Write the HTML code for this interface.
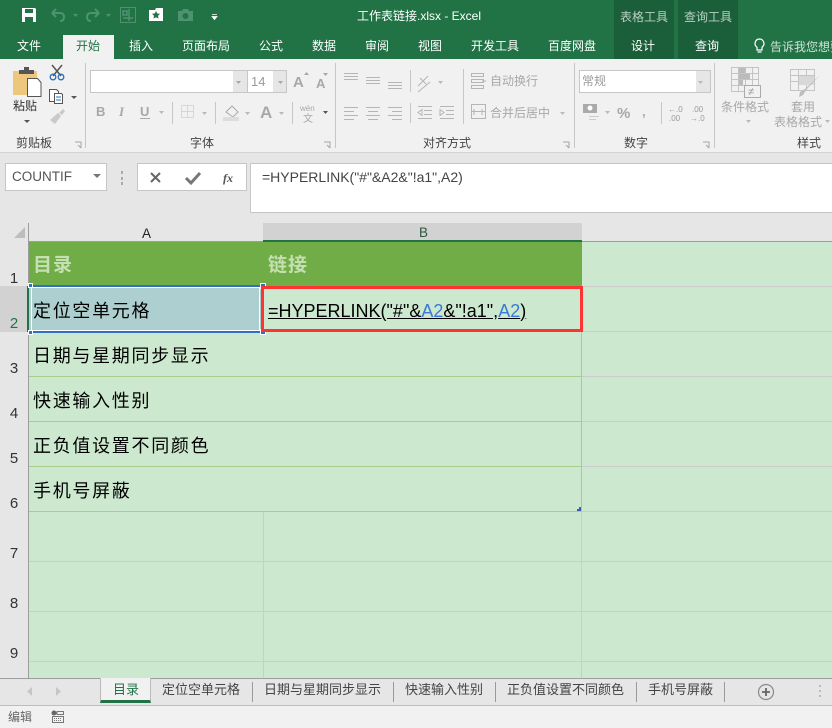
<!DOCTYPE html>
<html><head><meta charset="utf-8"><style>
*{margin:0;padding:0;box-sizing:border-box}
html,body{width:832px;height:728px;overflow:hidden;background:#f1f1f1}
body{position:relative;font-family:"Liberation Sans","Noto Sans CJK SC",sans-serif}
.a,.t{position:absolute}
.t{white-space:nowrap;line-height:1}
.r{font-size:12px;color:#444}
.g{font-size:12px;color:#a8a8a8}
.w{font-size:12px;color:#fff}
.c{font-size:18px;color:#000;letter-spacing:1.7px;left:33px}
.n{font-size:15px;color:#333;left:8px;width:12px;text-align:center}
.s{font-size:13px;color:#444;top:683px}
.l{position:absolute;background:#ccc}
.h{position:absolute;background:#a9cd8b}
.sep{position:absolute;width:1px;background:#c6c6c6}
.tab{position:absolute;width:1px;top:682px;height:20px;background:#9a9a9a}
svg{position:absolute;overflow:visible}
</style></head><body>
<div class="a" style="left:0;top:0;width:832px;height:59px;background:#217346"></div>
<div class="a" style="left:614px;top:0;width:60px;height:59px;background:#1b5e3a"></div>
<div class="a" style="left:678px;top:0;width:60px;height:59px;background:#1b5e3a"></div>
<div class="a" style="left:63px;top:35px;width:51px;height:24px;background:#f1f1f1"></div>
<svg style="left:0;top:0" width="340" height="34">
<path d="M22 8h13l1 1v13H22z" fill="#fff"/><path d="M25 9h8v4h-8zM25 17h8v5h-8z" fill="#217346"/>
<path d="M52 13l4-4M52 13l4 4M52 13h8q4 0 4 4t-4 4" stroke="#4e9270" stroke-width="2" fill="none"/>
<path d="M73 14h5l-2.500 3z" fill="#4e9270"/>
<path d="M99 13l-4-4M99 13l-4 4M99 13h-8q-4 0-4 4t4 4" stroke="#4e9270" stroke-width="2" fill="none"/>
<path d="M106 14h5l-2.500 3z" fill="#4e9270"/>
<rect x="120.500" y="7.500" width="15" height="15" fill="none" stroke="#4e9270"/><path d="M123 11h4v4h-4zM129 9v12M123 18h10" stroke="#4e9270" fill="none" stroke-width="1.500"/>
<path d="M149 10h6l1-2h7v13h-14z" fill="#fff"/><path d="M156 11l1.200 2.500 2.800.3-2 2 .5 2.800-2.500-1.300-2.500 1.300.5-2.800-2-2 2.800-.3z" fill="#217346"/>
<path d="M178 11h4l1-2h5l1 2h4v10h-15z" fill="#4e9270"/><circle cx="185.500" cy="16" r="3" fill="#217346"/>
<path d="M212 14.500h5M212 16.500h5l-2.500 3z" stroke="#fff" fill="#fff" stroke-width=".8"/>
</svg>
<span class="t w" style="left:357px;top:10px;font-size:12px">工作表链接.xlsx - Excel</span>
<span class="t" style="left:620px;top:11px;font-size:12px;color:#b9d0c2">表格工具</span>
<span class="t" style="left:684px;top:11px;font-size:12px;color:#b9d0c2">查询工具</span>
<span class="t w" style="left:17px;top:40px">文件</span>
<span class="t" style="left:76px;top:40px;font-size:12px;color:#217346">开始</span>
<span class="t w" style="left:129px;top:40px">插入</span>
<span class="t w" style="left:182px;top:40px">页面布局</span>
<span class="t w" style="left:259px;top:40px">公式</span>
<span class="t w" style="left:312px;top:40px">数据</span>
<span class="t w" style="left:365px;top:40px">审阅</span>
<span class="t w" style="left:418px;top:40px">视图</span>
<span class="t w" style="left:471px;top:40px">开发工具</span>
<span class="t w" style="left:548px;top:40px">百度网盘</span>
<span class="t w" style="left:631px;top:40px">设计</span>
<span class="t w" style="left:695px;top:40px">查询</span>
<span class="t" style="left:770px;top:41px;font-size:12px;color:#cfe0d6">告诉我您想要</span>
<svg style="left:752px;top:38px" width="16" height="18"><path d="M7.500 1a4.500 4.500 0 0 0-2.500 8.200V12h5V9.200A4.500 4.500 0 0 0 7.500 1zM5.500 14h4" fill="none" stroke="#fff" stroke-width="1.200"/></svg>

<div class="a" style="left:0;top:152px;width:832px;height:1px;background:#d4d4d4"></div>
<div class="a" style="left:0;top:153px;width:832px;height:70px;background:#e6e6e6"></div>
<div class="sep" style="left:85px;top:63px;height:85px"></div>
<div class="sep" style="left:335px;top:63px;height:85px"></div>
<div class="sep" style="left:574px;top:63px;height:85px"></div>
<div class="sep" style="left:714px;top:63px;height:85px"></div>
<div class="sep" style="left:463px;top:69px;height:55px"></div>
<div class="sep" style="left:410px;top:70px;height:22px"></div>
<div class="sep" style="left:410px;top:103px;height:20px"></div>

<svg style="left:0;top:60px" width="84" height="90">
<path d="M13 11h24v24H13z" fill="#eec77f"/>
<path d="M19 10h15v4H19z" fill="#555"/><path d="M24 7h5v3h-5z" fill="#555"/>
<path d="M27.500 18.500h10l3.500 4v14H27.500z" fill="#fff" stroke="#555"/>
<path d="M52 5l9 11M62 5l-9 11" stroke="#555" stroke-width="1.500"/><circle cx="53" cy="17" r="2.800" fill="none" stroke="#2a6fb5" stroke-width="1.300"/><circle cx="61" cy="17" r="2.800" fill="none" stroke="#2a6fb5" stroke-width="1.300"/>
<path d="M49.500 29.500h7l2 2v10h-9z" fill="#fff" stroke="#555"/><path d="M54.500 33.500h7l1 1v9h-8z" fill="#fff" stroke="#555"/><path d="M56 37h5M56 40h5" stroke="#2a6fb5"/>
<path d="M71 36h6l-3 3z" fill="#555"/>
<path d="M50 60l8-7 3 3-6 8zM59 53l4-4 2 2-3 4z" fill="#c9c9c9"/>
<path d="M24 60h6l-3 3z" fill="#555"/>
</svg>
<span class="t" style="left:13px;top:100px;font-size:12px;color:#333">粘贴</span>
<span class="t r" style="left:16px;top:137px">剪贴板</span>
<span class="t r" style="left:190px;top:137px">字体</span>
<span class="t r" style="left:423px;top:137px">对齐方式</span>
<span class="t r" style="left:624px;top:137px">数字</span>
<span class="t r" style="left:797px;top:137px">样式</span>
<svg style="left:0;top:140px" width="600" height="10"><path d="M75 2h6v6M78 5l3 3M324 2h6v6M327 5l3 3M563 2h6v6M566 5l3 3M703 2h6v6M706 5l3 3" fill="none" stroke="#a5a5a5"/></svg>

<div class="a" style="left:90px;top:70px;width:197px;height:23px;background:#fff;border:1px solid #c6c6c6"></div>
<div class="a" style="left:233px;top:71px;width:14px;height:21px;background:#e6e6e6"></div>
<div class="a" style="left:247px;top:70px;width:1px;height:23px;background:#c6c6c6"></div>
<div class="a" style="left:273px;top:71px;width:13px;height:21px;background:#e6e6e6"></div>
<span class="t" style="left:251px;top:75px;font-size:13px;color:#9a9a9a">14</span>
<svg style="left:85px;top:62px" width="250" height="68">
<path d="M151 19h5l-2.500 3zM193 19h5l-2.500 3z" fill="#a8a8a8"/>
<text x="208" y="25" font-size="15" font-family="Liberation Sans" fill="#a8a8a8" font-weight="bold">A</text><path d="M219 13h5l-2.500-3z" fill="#a8a8a8"/>
<text x="231" y="26" font-size="13" font-family="Liberation Sans" fill="#a8a8a8" font-weight="bold">A</text><path d="M238 11h5l-2.500 3z" fill="#a8a8a8"/>
<text x="11" y="54" font-size="13" font-family="Liberation Sans" fill="#a8a8a8" font-weight="bold">B</text>
<text x="34" y="54" font-size="13" font-family="Liberation Serif" fill="#a8a8a8" font-style="italic" font-weight="bold">I</text>
<text x="55" y="54" font-size="13" font-family="Liberation Sans" fill="#a8a8a8" font-weight="bold">U</text><path d="M55 56.500h10" stroke="#a8a8a8"/>
<path d="M74 49h5l-2.500 3zM117 50h5l-2.500 3zM160 50h5l-2.500 3zM194 50h5l-2.500 3z" fill="#b9b9b9"/>
<path d="M96.500 43.500h12v12h-12zM96.500 49.500h12M102.500 43.500v12" fill="none" stroke="#c9b9c9" stroke-dasharray="1 1"/>
<path d="M87.500 40v22M130.500 40v22M207.500 40v22" stroke="#c6c6c6"/>
<path d="M141 50l6-6 6 6-5 5z" fill="none" stroke="#aaa"/><path d="M138 55h16v4h-16z" fill="#ddd"/>
<text x="175" y="56" font-size="17" font-family="Liberation Sans" fill="#a8a8a8" font-weight="bold">A</text>
<text x="215" y="49" font-size="8" font-family="Liberation Sans" fill="#a8a8a8">wén</text>
<text x="218" y="60" font-size="10" font-family="Noto Sans CJK SC" fill="#a8a8a8">文</text>
<path d="M238 49h5l-2.500 3z" fill="#555"/>
</svg>

<svg style="left:340px;top:68px" width="130" height="60" stroke="#b5b5b5" fill="none">
<path d="M4 5.500h14M4 8.500h14M4 11.500h14M26 9.500h14M26 12.500h14M26 15.500h14M48 14.500h14M48 17.500h14M48 20.500h14"/>
<path d="M4 39.500h14M4 43.500h10M4 47.500h14M4 51.500h10M26 39.500h14M28 43.500h10M26 47.500h14M28 51.500h10M48 39.500h14M52 43.500h10M48 47.500h14M52 51.500h10"/>
<path d="M78 18l10-10M80 10l6 6M78 24l12-10"/>
<path d="M98 13h5l-2.500 3z" fill="#b9b9b9" stroke="none"/>
<path d="M78 38.500h14M84 42.500h8M84 46.500h8M78 50.500h14M100 38.500h14M106 42.500h8M106 46.500h8M100 50.500h14M78 44.500l4-3v6zM104 44.500l-4-3v6z"/>
</svg>
<svg style="left:470px;top:72px" width="100" height="50" stroke="#b5b5b5" fill="none">
<path d="M1.500 1.500h12v3h-12zM1.500 7.500h12v3h-12zM1.500 13.500h12v3h-12zM16 9h-4"/>
<path d="M1.500 32.500h14v14h-14zM1.500 39.500h14M4 37v6M12 37v6"/>
<path d="M90 40h5l-2.500 3z" fill="#b9b9b9" stroke="none"/>
</svg>
<span class="t g" style="left:490px;top:75px">自动换行</span>
<span class="t g" style="left:490px;top:107px">合并后居中</span>

<div class="a" style="left:579px;top:70px;width:132px;height:23px;background:#fff;border:1px solid #c6c6c6"></div>
<div class="a" style="left:696px;top:71px;width:14px;height:21px;background:#e6e6e6"></div>
<span class="t" style="left:582px;top:75px;font-size:12px;color:#9a9a9a">常规</span>
<svg style="left:580px;top:62px" width="135" height="70">
<path d="M118 19h5l-2.500 3z" fill="#b9b9b9"/>
<path d="M3 42h14v9H3z" fill="#aaa"/><circle cx="10" cy="46" r="2.500" fill="#fff"/><path d="M9 54.500h10M9 57.500h7" stroke="#ccc"/>
<path d="M25 49h5l-2.500 3z" fill="#b9b9b9"/>
<text x="37" y="56" font-size="15" font-family="Liberation Sans" fill="#a8a8a8" font-weight="bold">%</text>
<text x="62" y="54" font-size="13" font-family="Liberation Sans" fill="#a8a8a8" font-weight="bold">,</text>
<path d="M81.500 40v22" stroke="#c6c6c6"/>
<text x="88" y="50" font-size="8" font-family="Liberation Sans" fill="#9a9a9a">←.0</text><text x="89" y="59" font-size="8" font-family="Liberation Sans" fill="#9a9a9a">.00</text>
<text x="112" y="50" font-size="8" font-family="Liberation Sans" fill="#9a9a9a">.00</text><text x="110" y="59" font-size="8" font-family="Liberation Sans" fill="#9a9a9a">→.0</text>
</svg>
<svg style="left:730px;top:66px" width="102" height="60" fill="none" stroke="#c4c4c4">
<path d="M1.500 1.500h27v24h-27zM1.500 7.500h27M1.500 13.500h27M1.500 19.500h27M8.500 1.500v24M15.500 1.500v24M22.500 1.500v24"/>
<path d="M9 2h6v5h-6zM9 8h11v5H9zM9 14h4v5H9z" fill="#bbb" stroke="none"/>
<path d="M14.500 19.500h16v12h-16z" fill="#f1f1f1" stroke="#aaa"/><text x="18" y="29" font-size="11" font-family="Liberation Sans" fill="#999" stroke="none">≠</text>
<path d="M60.500 3.500h24v21h-24zM60.500 9.500h24M60.500 15.500h24M68.500 3.500v21M76.500 3.500v21"/>
<path d="M69 10h15v9H69z" fill="#d8d8d8" stroke="none"/>
<path d="M90 9L76 24l-3 5-4 2 1-5 5-3z" fill="#bdbdbd" stroke="none"/>
</svg>
<span class="t g" style="left:721px;top:101px">条件格式</span>
<span class="t g" style="left:791px;top:101px">套用</span>
<span class="t g" style="left:774px;top:116px">表格格式</span>
<svg style="left:740px;top:118px" width="92" height="10"><path d="M6 2h5l-2.500 3zM85 2h5l-2.500 3z" fill="#b9b9b9"/></svg>

<div class="a" style="left:5px;top:163px;width:102px;height:28px;background:#fff;border:1px solid #c6c6c6"></div>
<span class="t" style="left:12px;top:170px;font-size:13.500px;color:#555">COUNTIF</span>
<svg style="left:93px;top:174px" width="10" height="6"><path d="M0 0h8l-4 4z" fill="#777"/></svg>
<svg style="left:120px;top:170px" width="6" height="16"><path d="M2 1v3M2 7v3M2 12v3" stroke="#aaa" stroke-width="2"/></svg>
<div class="a" style="left:137px;top:163px;width:110px;height:28px;background:#fff;border:1px solid #c6c6c6"></div>
<svg style="left:140px;top:165px" width="100" height="24">
<path d="M11 8l9 9M20 8l-9 9" stroke="#666" stroke-width="2"/>
<path d="M46 13l5 5 9-10" stroke="#777" stroke-width="3" fill="none"/>
<text x="83" y="17" font-size="12" font-family="Liberation Serif" font-style="italic" font-weight="bold" fill="#555">fx</text>
</svg>
<div class="a" style="left:250px;top:163px;width:582px;height:50px;background:#fff;border:1px solid #c6c6c6;border-right:0"></div>
<span class="t" style="left:262px;top:170px;font-size:14px;color:#444">=HYPERLINK("#"&amp;A2&amp;"!a1",A2)</span>

<div class="a" style="left:0;top:223px;width:832px;height:455px;background:#cce8cf"></div>
<div class="a" style="left:0;top:223px;width:29px;height:455px;background:#e6e6e6;border-right:1px solid #9d9d9d"></div>
<div class="a" style="left:29px;top:223px;width:803px;height:19px;background:#e6e6e6;border-bottom:1px solid #9d9d9d"></div>
<svg style="left:12px;top:226px" width="14" height="14"><path d="M13 1v11H2z" fill="#bdbdbd"/></svg>
<div class="a" style="left:263px;top:223px;width:319px;height:19px;background:#d2d2d2;border-bottom:2px solid #217346"></div>
<div class="a" style="left:0;top:286px;width:29px;height:46px;background:#d2d2d2;border-right:2px solid #217346"></div>
<span class="t" style="left:142px;top:227px;font-size:13.500px;color:#222">A</span>
<span class="t" style="left:419px;top:226px;font-size:13.500px;color:#2a5a3c">B</span>
<div class="a" style="left:29px;top:242px;width:553px;height:44px;background:#70ad47"></div>
<span class="t" style="left:33px;top:256px;font-size:19px;font-weight:bold;color:#c6e0b4;letter-spacing:1px">目录</span>
<span class="t" style="left:268px;top:256px;font-size:19px;font-weight:bold;color:#c6e0b4;letter-spacing:1px">链接</span>

<div class="l" style="left:29px;top:561px;width:803px;height:1px"></div>
<div class="l" style="left:29px;top:611px;width:803px;height:1px"></div>
<div class="l" style="left:29px;top:661px;width:803px;height:1px"></div>
<div class="l" style="left:582px;top:331px;width:250px;height:1px"></div>
<div class="l" style="left:582px;top:376px;width:250px;height:1px"></div>
<div class="l" style="left:582px;top:421px;width:250px;height:1px"></div>
<div class="l" style="left:582px;top:466px;width:250px;height:1px"></div>
<div class="l" style="left:582px;top:511px;width:250px;height:1px"></div>
<div class="l" style="left:582px;top:286px;width:250px;height:1px"></div>
<div class="l" style="left:263px;top:512px;width:1px;height:166px"></div>
<div class="l" style="left:581px;top:512px;width:1px;height:166px"></div>
<div class="h" style="left:29px;top:376px;width:553px;height:1px"></div>
<div class="h" style="left:29px;top:421px;width:553px;height:1px"></div>
<div class="h" style="left:29px;top:466px;width:553px;height:1px"></div>
<div class="h" style="left:29px;top:511px;width:553px;height:1px"></div>
<div class="h" style="left:581px;top:286px;width:1px;height:226px"></div>
<div class="a" style="left:577px;top:509px;width:4px;height:2px;background:#3f5bb5"></div>
<div class="a" style="left:579px;top:507px;width:2px;height:2px;background:#3f5bb5"></div>

<div class="a" style="left:29px;top:285px;width:233px;height:48px;background:#aecfcf;border-top:2px solid #2f6fc6;border-bottom:2px solid #2f6fc6;outline:1px solid #fff;outline-offset:-3px"></div>
<div class="a" style="left:28px;top:283px;width:5px;height:5px;background:#2f6fc6;border:1px solid #fff"></div>
<div class="a" style="left:28px;top:330px;width:5px;height:5px;background:#2f6fc6;border:1px solid #fff"></div>
<div class="a" style="left:260px;top:283px;width:6px;height:6px;background:#2f6fc6;border:1px solid #fff"></div>
<div class="a" style="left:260px;top:329px;width:6px;height:6px;background:#2f6fc6;border:1px solid #fff"></div>
<div class="a" style="left:261px;top:286px;width:322px;height:46px;border:3px solid #ff3333"></div>

<span class="t c" style="top:302px">定位空单元格</span>
<span class="t c" style="top:347px">日期与星期同步显示</span>
<span class="t c" style="top:392px">快速输入性别</span>
<span class="t c" style="top:437px">正负值设置不同颜色</span>
<span class="t c" style="top:482px">手机号屏蔽</span>
<span class="t" style="left:268px;top:302px;font-size:18px;color:#000;text-decoration:underline;text-underline-offset:1px">=HYPERLINK("#"&amp;<span style="color:#3b78d8">A2</span>&amp;"!a1",<span style="color:#3b78d8">A2</span>)</span>

<span class="t n" style="top:271px">1</span>
<span class="t n" style="top:316px;color:#217346">2</span>
<span class="t n" style="top:361px">3</span>
<span class="t n" style="top:406px">4</span>
<span class="t n" style="top:451px">5</span>
<span class="t n" style="top:496px">6</span>
<span class="t n" style="top:546px">7</span>
<span class="t n" style="top:596px">8</span>
<span class="t n" style="top:646px">9</span>

<div class="a" style="left:0;top:678px;width:832px;height:1px;background:#9d9d9d"></div>
<div class="a" style="left:0;top:679px;width:832px;height:27px;background:#e6e6e6;border-bottom:1px solid #bdbdbd"></div>
<div class="a" style="left:100px;top:678px;width:51px;height:25px;background:#f1f1f1;border-left:1px solid #bbb;border-right:1px solid #bbb;border-bottom:3px solid #217346"></div>
<svg style="left:25px;top:686px" width="40" height="12"><path d="M7 1v9L2 5.500zM31 1v9l5-4.500z" fill="#c6c6c6"/></svg>
<span class="t s" style="left:113px;color:#217346">目录</span>
<span class="t s" style="left:162px">定位空单元格</span>
<span class="t s" style="left:264px">日期与星期同步显示</span>
<span class="t s" style="left:405px">快速输入性别</span>
<span class="t s" style="left:507px">正负值设置不同颜色</span>
<span class="t s" style="left:648px">手机号屏蔽</span>
<div class="tab" style="left:252px"></div><div class="tab" style="left:393px"></div><div class="tab" style="left:495px"></div><div class="tab" style="left:636px"></div><div class="tab" style="left:724px"></div>
<svg style="left:757px;top:683px" width="20" height="20"><circle cx="9" cy="9" r="7.500" fill="none" stroke="#8a8a8a" stroke-width="1.200"/><path d="M5 9h8M9 5v8" stroke="#666" stroke-width="1.800"/></svg>
<svg style="left:818px;top:684px" width="4" height="16"><path d="M2 1v2M2 6v2M2 11v2" stroke="#bbb" stroke-width="2"/></svg>
<span class="t" style="left:8px;top:711px;font-size:12px;color:#666">编辑</span>
<svg style="left:51px;top:710px" width="14" height="14"><circle cx="3" cy="3" r="2.500" fill="#666"/><path d="M1.500 6.500h11v6h-11zM6 1.500h6.500v3H6z" fill="none" stroke="#777"/><path d="M3 8.500h8M3 10.500h8" stroke="#777" stroke-dasharray="1 1"/></svg>
</body></html>
